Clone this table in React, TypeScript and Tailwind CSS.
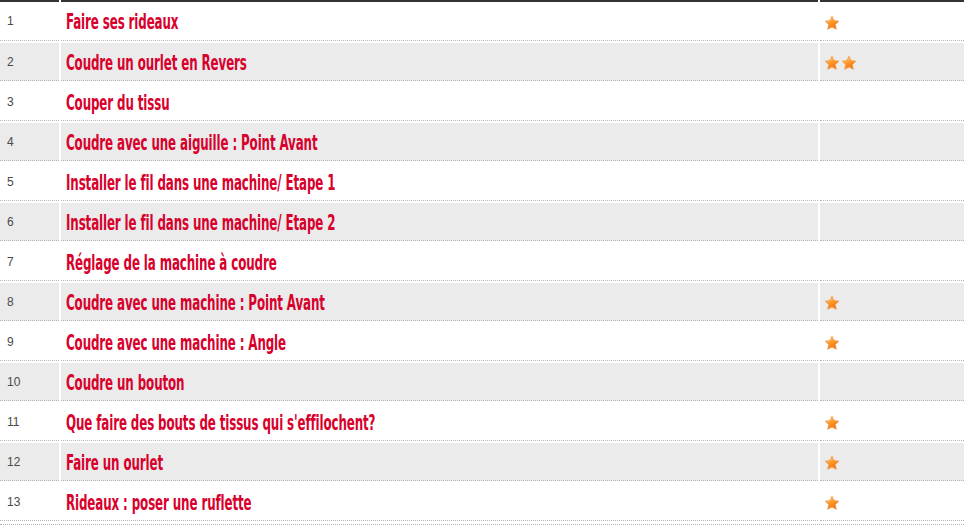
import React from "react";

const rows: { title: string; stars: number }[] = [
  { title: "Faire ses rideaux", stars: 1 },
  { title: "Coudre un ourlet en Revers", stars: 2 },
  { title: "Couper du tissu", stars: 0 },
  { title: "Coudre avec une aiguille : Point Avant", stars: 0 },
  { title: "Installer le fil dans une machine/ Etape 1", stars: 0 },
  { title: "Installer le fil dans une machine/ Etape 2", stars: 0 },
  { title: "Réglage de la machine à coudre", stars: 0 },
  { title: "Coudre avec une machine : Point Avant", stars: 1 },
  { title: "Coudre avec une machine : Angle", stars: 1 },
  { title: "Coudre un bouton", stars: 0 },
  { title: "Que faire des bouts de tissus qui s'effilochent?", stars: 1 },
  { title: "Faire un ourlet", stars: 1 },
  { title: "Rideaux : poser une ruflette", stars: 1 },
];

function Star() {
  return (
    <svg width="16" height="16" viewBox="0 0 24 24">
      <defs>
        <linearGradient id="starFill" x1="0.2" y1="0" x2="0.7" y2="1">
          <stop offset="0" stopColor="#ffe2b0" />
          <stop offset="0.45" stopColor="#ff9a2e" />
          <stop offset="1" stopColor="#f06a08" />
        </linearGradient>
      </defs>
      <path
        d="M12 1.8l3.1 6.6 7.2.9-5.3 5 1.4 7.1L12 17.9l-6.4 3.5L7 14.3l-5.3-5 7.2-.9z"
        fill="url(#starFill)"
        stroke="#f29a3c"
        strokeWidth="1.2"
        strokeLinejoin="round"
      />
    </svg>
  );
}

export default function App() {
  return (
    <div className="w-[965px] h-[527px] bg-white overflow-hidden font-['Liberation_Sans',Arial,sans-serif]">
      <div className="w-[964px] border-b border-dotted border-[#b5b5b5] pb-[3px]">
        <div className="flex flex-col gap-[2px]">
          {rows.map((r, i) => {
            const bg = i % 2 === 1 ? "bg-[#ebebeb]" : "bg-white";
            const top =
              i === 0 ? "border-t-2 [border-top-style:solid] border-t-[#333] h-[41px]" : "h-[38px]";
            const cell = `${bg} ${top} border-b [border-bottom-style:dotted] border-b-[#b5b5b5]`;
            return (
              <div key={i} className="grid grid-cols-[59px_757px_144px] gap-x-[2px]">
                <div className={`${cell} flex items-center pl-[7px] text-[12px] text-[#4a4a4a]`}>
                  {i + 1}
                </div>
                <div className={`${cell} flex items-center pl-[5px] pt-[1px]`}>
                  <span className="inline-block origin-left scale-x-[0.6] whitespace-nowrap font-['DejaVu_Sans_Condensed','DejaVu_Sans',sans-serif] font-bold text-[22px] text-[#d8002c] tracking-[-0.2px]">
                    {r.title}
                  </span>
                </div>
                <div className={`${cell} flex items-center gap-[1px] pl-[4px] pt-[3px]`}>
                  {Array.from({ length: r.stars }).map((_, k) => (
                    <Star key={k} />
                  ))}
                </div>
              </div>
            );
          })}
        </div>
      </div>
    </div>
  );
}
